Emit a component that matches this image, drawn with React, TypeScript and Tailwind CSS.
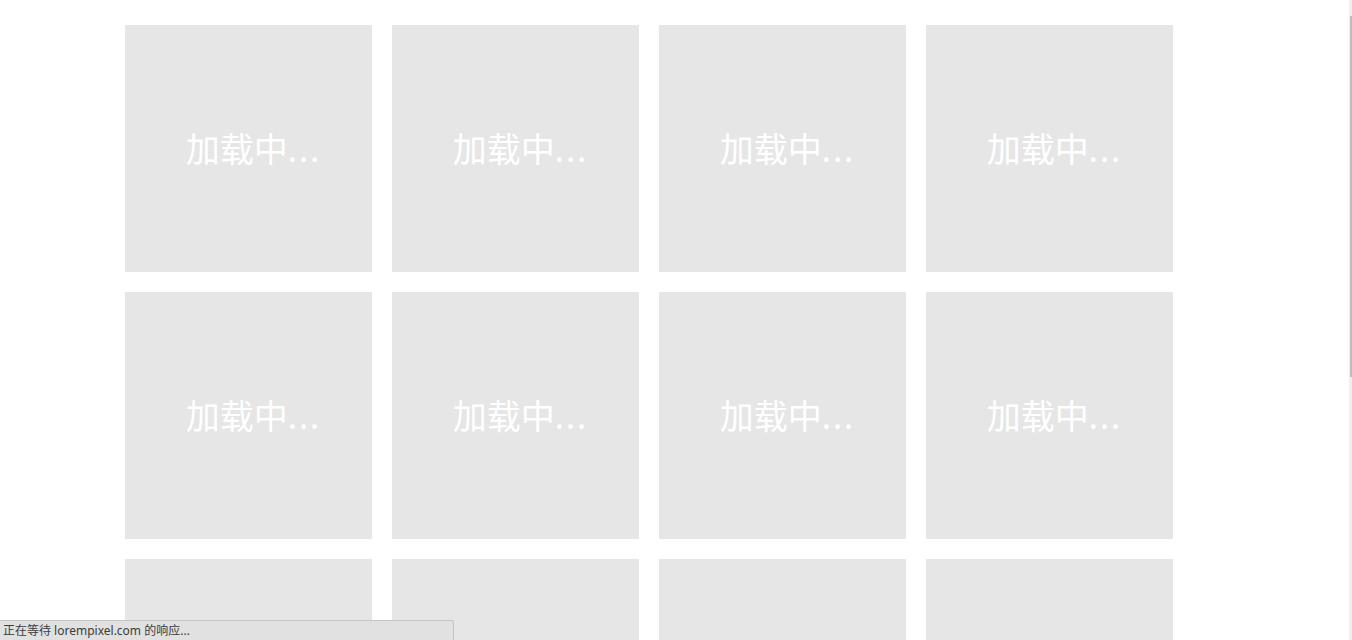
import React from "react";

const tiles = Array.from({ length: 12 });

export default function App() {
  return (
    <div
      className="relative h-[640px] w-[1352px] overflow-hidden bg-white"
      style={{ fontFamily: '"Noto Sans", "Noto Sans CJK SC", sans-serif' }}
    >
      <div className="flex h-full">
        {/* grid of loading placeholders */}
        <div className="flex-1 pl-[125px] pt-[25px]">
          <div className="grid w-[1048px] grid-cols-4 gap-5">
            {tiles.map((_, i) => (
              <div
                key={i}
                className="flex h-[247px] w-[247px] items-center justify-center bg-[#e6e6e6] pl-[10px] text-[34px] leading-none text-white"
              >
                加载中<span className="tracking-[2px]">...</span>
              </div>
            ))}
          </div>
        </div>

        {/* thin scrollbar */}
        <div className="flex h-full w-[3px] justify-center bg-[#efefef]">
          <div className="mt-[16px] h-[361px] w-[2px] bg-[#bdbdbd]"></div>
        </div>
      </div>

      {/* status bubble */}
      <div className="absolute bottom-0 left-0 flex h-[20px] w-[454px] items-center rounded-tr-[3px] border-t border-r border-[#c4c4c4] bg-[#e1e1e1] pl-[3px] text-[12px] text-[#3c3c3c]">
        正在等待 lorempixel.com 的响应...
      </div>
    </div>
  );
}
